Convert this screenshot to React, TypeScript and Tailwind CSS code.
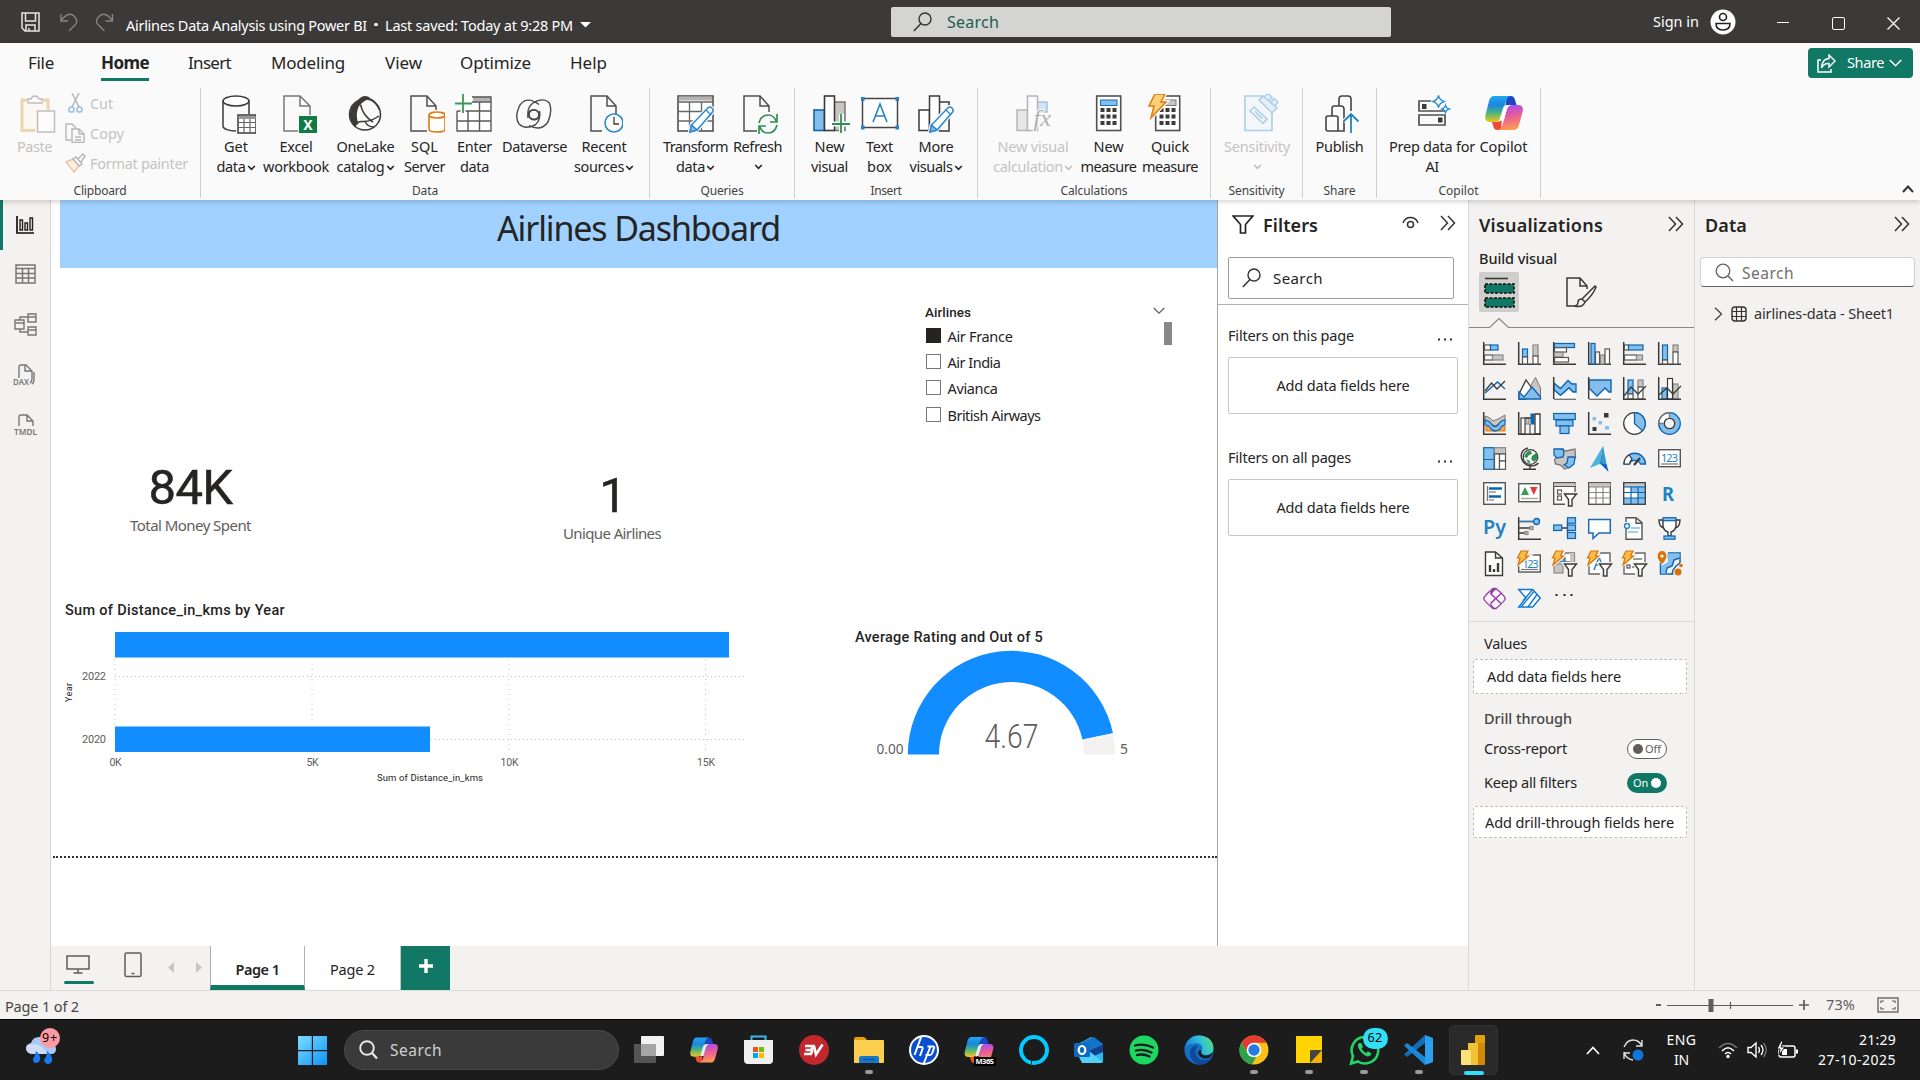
import React, { useLayoutEffect, useRef, useState } from "react";

const DK = "#3b3a39";
const BL = "#0f64b0";
const LB = "#83beec";
const GY = "#797775";
const LG = "#c8c6c4";

/** Single-line text whose tracking is tuned so that it spans exactly `w` pixels. */
function T({ w, className = "", children }: { w?: number; className?: string; children: string }) {
  const ref = useRef<HTMLSpanElement>(null);
  const [ls, setLs] = useState(0);
  useLayoutEffect(() => {
    const el = ref.current;
    if (!el || !w) return;
    el.style.letterSpacing = "0px";
    const natural = el.getBoundingClientRect().width;
    const next = (w - natural) / children.length;
    el.style.letterSpacing = next + "px";
    setLs(next);
  }, [w, children]);
  return (
    <span ref={ref} className={"inline-block shrink-0 whitespace-pre " + className} style={{ letterSpacing: ls }}>
      {children}
    </span>
  );
}

function Svg({ w, h, vb, className = "", children }: { w: number; h: number; vb?: string; className?: string; children: React.ReactNode }) {
  return (
    <svg width={w} height={h} viewBox={vb ?? `0 0 ${w} ${h}`} fill="none" className={"block shrink-0 " + className}>
      {children}
    </svg>
  );
}

const Chev = ({ c = "#242424" }: { c?: string }) => (
  <Svg w={9} h={6} className="mt-[4px] ml-[1px]">
    <path d="M1.2 1l3.3 3.4L7.8 1" stroke={c} strokeWidth="1.6" />
  </Svg>
);

/* ---------- Ribbon icons (38 x 40) ---------- */
const I = ({ children, dim }: { children: React.ReactNode; dim?: boolean }) => (
  <Svg w={38} h={40} className={dim ? "opacity-35" : ""}>
    {children}
  </Svg>
);
const Pencil = ({ x = 0, y = 0 }) => (
  <g transform={`translate(${x} ${y})`}>
    <path d="M1 26l1.5-7L19 1.8q2-1.6 4 .2t.6 4L8 24z" fill="#fafafa" stroke="#fafafa" strokeWidth="4" />
    <path d="M1 26l1.5-7L19 1.8q2-1.6 4 .2t.6 4L8 24z" fill="#fff" stroke="#2b88d0" strokeWidth="1.5" />
    <path d="M1 26l1.5-7 5.5 5z" fill={LB} stroke="#2b88d0" strokeWidth="1.5" />
    <path d="M17 4l5 5" stroke="#2b88d0" strokeWidth="1.3" />
  </g>
);
const PageCut = () => <path d="M17 37H6V2h16l9 10v9M22 2v10h9" stroke="#505050" strokeWidth="1.5" fill="#fafafa" />;
const Calc = ({ top = LB }: { top?: string }) => (
  <g>
    <rect x="7.7" y="2" width="24" height="34.5" fill="#fff" stroke="#505050" strokeWidth="1.6" />
    <rect x="11.5" y="6" width="16.5" height="5.5" fill={top} stroke={top === LB ? "#1b6ec2" : GY} />
    {[14, 20.5, 27].map((y) => [11.5, 17.5, 23.5].map((x) => <rect key={x + "-" + y} x={x} y={y} width="4" height="4" fill="#3b3a39" />))}
  </g>
);
const CopilotLogo = ({ w, h, id, className = "" }: { w: number; h: number; id: string; className?: string }) => (
  <Svg w={w} h={h} vb="0 0 38 34" className={className}>
    <defs>
      <linearGradient id={id + "a"} x1="0" y1="0" x2="0" y2="1">
        <stop offset="0" stopColor="#1ea7f0" />
        <stop offset=".35" stopColor="#1b86de" />
        <stop offset=".65" stopColor="#4bb57c" />
        <stop offset="1" stopColor="#f5c518" />
      </linearGradient>
      <linearGradient id={id + "b"} x1="0.3" y1="0" x2="0.5" y2="1">
        <stop offset="0" stopColor="#a04df0" />
        <stop offset=".45" stopColor="#e85a9c" />
        <stop offset="1" stopColor="#ff9d4d" />
      </linearGradient>
    </defs>
    <path d="M22 0h4q3 0 4 4l1.6 5H24q-3 0-4 3z" fill="#1a48c4" />
    <path d="M9 0h16q-3 1-4 5l-5 17q-1.500 4-5 4H5q-6 0-4.500-7L4 5Q5.500 0 9 0z" fill={`url(#${id}a)`} />
    <path d="M16 34h-4q-3 0-3.800-4L7 26h5q4 0 5-4z" fill="#ee4b3a" />
    <path d="M27 9h6q6 0 4.500 7L34 29q-1.500 5-5 5H13q3-1 4.500-5L22 13q1.500-4 5-4z" fill={`url(#${id}b)`} />
    <path d="M22.500 9h4.500q-3.500 0-5 4l-3.500 12h-4.500l4-13q1-3 4.500-3z" fill="#fff" opacity=".9" />
  </Svg>
);

const icons: Record<string, React.ReactNode> = {
  get: (
    <I>
      <path d="M5 7v25c0 3 6 5 13 5M31 7v13" stroke={DK} strokeWidth="1.5" />
      <ellipse cx="18" cy="7" rx="13" ry="5" stroke={DK} strokeWidth="1.5" fill="#fff" />
      <rect x="20" y="21" width="18" height="18" fill="#fff" stroke={DK} strokeWidth="1.500" />
      <path d="M20.500 23.500h17" stroke="#999" strokeWidth="3" />
      <path d="M20 28.500h18M20 33.500h18M26 25v14M32 25v14" stroke="#666" strokeWidth="1.200" />
    </I>
  ),
  excel: (
    <I>
      <path d="M19 37H5V2h16l10 10v9M21 2v10h10" stroke="#777" strokeWidth="1.500" fill="#fafafa" />
      <rect x="20" y="22" width="18" height="17" fill="#107c41" />
      <text x="29" y="36" textAnchor="middle" fontSize="14" fontWeight="700" fill="#fff" className="font-['Noto_Sans']">X</text>
    </I>
  ),
  onelake: (
    <I>
      <circle cx="19" cy="20.500" r="15.500" stroke={DK} strokeWidth="1.500" />
      <path d="M12 6Q18-1 25 4.500Q17 6 12.500 13Q9 21 12.500 30L8 32Q0 22 7 11z" fill={DK} />
      <path d="M14.500 10.500Q17 22 27 28M9 32.500Q10 27 17 27.500Q24 28 33 22M24.500 5Q31 9 33.500 16" stroke={DK} strokeWidth="1.500" />
      <path d="M19 27q2 6 9 6" stroke={DK} strokeWidth="1.300" />
    </I>
  ),
  sql: (
    <I>
      <path d="M20 37H4V2h16l9 10v4M20 2v10h9" stroke="#505050" strokeWidth="1.500" fill="#fafafa" />
      <path d="M22 21v14c0 4 16 4 16 0V21" fill="#fff" stroke="#e07a10" strokeWidth="1.600" />
      <ellipse cx="30" cy="21" rx="8" ry="3" fill="#fff" stroke="#e07a10" strokeWidth="1.600" />
    </I>
  ),
  enter: (
    <I>
      <rect x="2" y="3" width="34" height="34" fill="#fff" />
      <path d="M18 5h18" stroke="#b5b3b1" strokeWidth="5" />
      <path d="M2 17v20h34V3H17M2 17h34M2 27h34M13 17v20M24.500 8v29M17 8h19" stroke="#5a5a5a" strokeWidth="1.400" />
      <path d="M8 0v19M-1 9.500h18" stroke="#fafafa" strokeWidth="5" />
      <path d="M8 0v19M-1 9.500h18" stroke="#3a9a52" strokeWidth="1.800" />
    </I>
  ),
  dataverse: (
    <I>
      <path d="M24 10.500Q12 1.500 5 11Q-1 23 4 30Q10 36 20 31Q25 27 24.500 21Q23 15 17 16Q12 18 13 24" stroke="#4a4948" strokeWidth="1.400" />
      <path d="M14 31.500Q26 38 33 28Q38 16 34 8.500Q28 3 18 9Q12.500 13 13 20Q15 27 21 25.500Q26 23 24.500 17" stroke="#4a4948" strokeWidth="1.400" />
      <circle cx="19" cy="20.500" r="4.800" stroke="#4a4948" strokeWidth="1.400" />
    </I>
  ),
  recent: (
    <I>
      <PageCut />
      <circle cx="29" cy="29" r="9" fill="#fff" stroke="#2b88c8" strokeWidth="1.600" />
      <path d="M29 23v7h5" stroke={DK} strokeWidth="1.300" />
    </I>
  ),
  transform: (
    <I>
      <rect x="1" y="2" width="35" height="35" fill="#fff" stroke="#505050" strokeWidth="1.600" />
      <path d="M2 4.500h33" stroke="#b5b3b1" strokeWidth="4" />
      <path d="M1 8h35M1 17.500h35M1 27h35M12.500 8v29M24.500 8v29" stroke="#666" strokeWidth="1.300" />
      <Pencil x={12} y={12} />
    </I>
  ),
  refresh: (
    <I>
      <path d="M16 37H3V2h16l9 10v6M19 2v10h9" stroke="#505050" strokeWidth="1.500" fill="#fafafa" />
      <path d="M18 29q2-8 9-8 6 0 8 6M36 20v8h-7M36 31q-2 8-9 8-6 0-8-6M18 40v-8h7" stroke="#2f9151" strokeWidth="1.700" />
    </I>
  ),
  newvisual: (
    <I>
      <rect x="22" y="8" width="11" height="28.500" fill={LG} stroke={GY} strokeWidth="1.500" />
      <rect x="2" y="16" width="10.500" height="20.500" fill={LB} stroke={BL} strokeWidth="1.600" />
      <rect x="12.500" y="2" width="10" height="34.500" fill="#fff" stroke={DK} strokeWidth="1.600" />
      <path d="M20 30h19M29.500 20v20" stroke="#fafafa" strokeWidth="5" />
      <path d="M20 30h18M29 20v19" stroke="#2f9151" strokeWidth="1.800" />
    </I>
  ),
  textbox: (
    <I>
      <rect x="1.500" y="4.500" width="35" height="29" fill="#fff" stroke="#444" strokeWidth="1.500" />
      {[0, 34.500].map((x) => [3, 31.500].map((y) => <rect key={x + "-" + y} x={x} y={y} width="3.500" height="4" fill="#2283cc" />))}
      <path d="M12 28l7-18 7 18M14.500 22h9" stroke="#2283cc" strokeWidth="1.600" />
    </I>
  ),
  more: (
    <I>
      <path d="M23 8h9v29H22" stroke={DK} strokeWidth="1.500" />
      <rect x="2" y="16" width="10.500" height="20.500" fill="#fff" stroke={DK} strokeWidth="1.500" />
      <rect x="12.500" y="2" width="10" height="34.500" fill="#fff" stroke={DK} strokeWidth="1.500" />
      <Pencil x={12} y={12} />
    </I>
  ),
  newcalc: (
    <I dim>
      <rect x="2" y="16" width="10.500" height="20.500" fill={LG} stroke={DK} strokeWidth="1.500" />
      <rect x="22" y="8" width="10" height="10" fill={LB} stroke={BL} strokeWidth="1.500" />
      <rect x="12.500" y="2" width="10" height="34.500" fill="#fff" stroke={DK} strokeWidth="1.500" />
      <text x="18.500" y="32" fontSize="24" fontStyle="italic" fill="#222" stroke="#fafafa" strokeWidth="2" paintOrder="stroke" className="font-['Liberation_Serif']">fx</text>
    </I>
  ),
  measure: (
    <I>
      <Calc />
    </I>
  ),
  quick: (
    <I>
      <Calc top={LG} />
      <path d="M7 0h10l-4 8h5L3 24l3-12H1z" fill="#fbc657" stroke="#fafafa" strokeWidth="4" />
      <path d="M7 0h10l-4 8h5L3 24l3-12H1z" fill="#fbd277" stroke="#e07a10" strokeWidth="1.500" />
    </I>
  ),
  sens: (
    <I dim>
      <path d="M22 2H4v34.500h27V19" fill="#e8f2fb" stroke="#1683c8" strokeWidth="1.600" />
      <path d="M9 17l4-4 13 12-4 4.500zM14 17.500l7.500 7" fill="#d6eaf9" stroke="#1683c8" strokeWidth="1.500" />
      <path d="M18 6l4-4 14 12-5 5zM23 3l4-3.500 4 3.500-3 4M34 12l3-4-4-3.500-3 3.500" fill="#bcdcf5" stroke="#1683c8" strokeWidth="1.500" />
    </I>
  ),
  publish: (
    <I>
      <path d="M6 37q-2 0-2-2V24q0-2 2-2h8q2 0 2 2v13zM10 22v-7q0-3 2-3h7q3 0 3 3v22H6M17 12V5q0-3 3-3h6q3 0 3 3v12" stroke="#444" strokeWidth="1.600" />
      <path d="M29 39V21M21.500 27.500L29 20l7.500 7.500" stroke="#fafafa" strokeWidth="4" />
      <path d="M29 39V20.500M21.500 27.500L29 20l7.500 7.500" stroke="#2283c4" strokeWidth="1.800" />
    </I>
  ),
  prep: (
    <I>
      <path d="M17 7H5v10h27M5 21h26v10H5z" stroke="#505050" strokeWidth="1.700" />
      <rect x="8" y="10" width="4.500" height="5" fill={DK} />
      <rect x="24" y="23.500" width="4.500" height="5" fill={DK} />
      <path d="M24.500 1.500q1 4.500 5.500 6-4.500 1.500-5.500 6-1-4.500-5.500-6 4.500-1.500 5.500-6zM31.500 11.500q.7 2.700 3.500 3.500-2.800.8-3.500 3.500-.7-2.700-3.500-3.500 2.800-.8 3.500-3.500z" fill="#fff" stroke="#2b8fd8" strokeWidth="1.400" />
    </I>
  ),
  copilot: <CopilotLogo w={38} h={34} id="rc" className="mb-[4px] mt-[2px]" />,
};

type Item = { i: string; w: number; l1: [string, number]; l2?: [string, number] | "chev"; chev?: boolean; dim?: boolean; dx?: number };
const groups: { w: number; pl: number; label: [string, number]; items: Item[] }[] = [
  {
    w: 449, pl: 5, label: ["Data", 26],
    items: [
      { i: "get", w: 60, l1: ["Get", 24], l2: ["data", 29], chev: true, dx: 1 },
      { i: "excel", w: 60, l1: ["Excel", 33], l2: ["workbook", 66], dx: 2 },
      { i: "onelake", w: 79, l1: ["OneLake", 58], l2: ["catalog", 48], chev: true, dx: -1 },
      { i: "sql", w: 39, l1: ["SQL", 27], l2: ["Server", 41], dx: 1 },
      { i: "enter", w: 61, l1: ["Enter", 35], l2: ["data", 29], dx: -1 },
      { i: "dataverse", w: 59, l1: ["Dataverse", 65], dx: -1 },
      { i: "recent", w: 80, l1: ["Recent", 45], l2: ["sources", 50], chev: true },
    ],
  },
  {
    w: 145, pl: 6, label: ["Queries", 43],
    items: [
      { i: "transform", w: 79, l1: ["Transform", 65], l2: ["data", 29], chev: true },
      { i: "refresh", w: 45, l1: ["Refresh", 49], l2: "chev", dx: 2 },
    ],
  },
  {
    w: 183, pl: 7, label: ["Insert", 31],
    items: [
      { i: "newvisual", w: 55, l1: ["New", 30], l2: ["visual", 37], dx: 1 },
      { i: "textbox", w: 45, l1: ["Text", 27], l2: ["box", 25] },
      { i: "more", w: 68, l1: ["More", 35], l2: ["visuals", 43], chev: true },
    ],
  },
  {
    w: 233, pl: 6, label: ["Calculations", 67],
    items: [
      { i: "newcalc", w: 98, l1: ["New visual", 71], l2: ["calculation", 70], chev: true, dim: true, dx: 1 },
      { i: "measure", w: 53, l1: ["New", 30], l2: ["measure", 56], dx: -1 },
      { i: "quick", w: 70, l1: ["Quick", 38], l2: ["measure", 56], dx: -3 },
    ],
  },
  { w: 92, pl: 0, label: ["Sensitivity", 56], items: [{ i: "sens", w: 92, l1: ["Sensitivity", 66], l2: "chev", dim: true, dx: 3 }] },
  { w: 74, pl: 0, label: ["Share", 32], items: [{ i: "publish", w: 73, l1: ["Publish", 48], dx: 1 }] },
  {
    w: 164, pl: 5, label: ["Copilot", 40],
    items: [
      { i: "prep", w: 100, l1: ["Prep data for", 86], l2: ["AI", 13], dx: 1 },
      { i: "copilot", w: 43, l1: ["Copilot", 48] },
    ],
  },
];

function RibbonItem({ it }: { it: Item }) {
  const c = it.dim ? "#c0bfbe" : "#242424";
  return (
    <div className={"flex shrink-0 flex-col items-center text-[14.500px] leading-[20px] " + (it.dim ? "text-[#c4c3c2]" : "text-[#242424]")}>
      <div className="flex flex-col items-center" style={{ width: it.w }}>
        <div style={{ marginLeft: 2 * (it.dx ?? 0) }}>{icons[it.i]}</div>
        <div className="mt-[2px] flex"><T w={it.l1[1]}>{it.l1[0]}</T></div>
        {it.l2 === "chev" ? (
          <div className="pt-[4px]"><Chev c={c} /></div>
        ) : it.l2 ? (
          <div className="flex items-center">
            <T w={it.l2[1]}>{it.l2[0]}</T>
            {it.chev && <Chev c={c} />}
          </div>
        ) : null}
      </div>
    </div>
  );
}

/* ---------- Visualization gallery icons (23 x 23) ---------- */
const Ax = () => <path d="M.7 0v22.300H23" stroke={DK} strokeWidth="1.500" />;
const R = ({ x, y, w, h, k = "w" }: { x: number; y: number; w: number; h: number; k?: "w" | "b" | "g" | "d" }) => (
  <rect
    x={x} y={y} width={w} height={h} strokeWidth="1.200"
    fill={k === "b" ? LB : k === "g" ? LG : "#fff"}
    stroke={k === "b" ? BL : k === "g" ? "#8a8886" : k === "d" ? DK : "#555"}
  />
);
const Bolt = () => (
  <g>
    <path d="M3-1h8l-3 5h3L-.5 13l2-7H-1z" stroke="#f3f2f1" strokeWidth="3.500" fill="#f3f2f1" />
    <path d="M3-1h7L7.500 4H10.500L0 13l2-7H-.5z" fill="#fcbf4a" stroke="#d9730a" strokeWidth="1.200" />
  </g>
);
const Funnel = () => (
  <path d="M11.500 12h12l-4.500 5.500v7h-3.500v-7z" fill="#fff" stroke="#f3f2f1" strokeWidth="4" paintOrder="stroke" />
);
const FunnelLine = () => <path d="M11.500 12h12l-4.500 5.500v6.500h-3.500v-6.500z" fill="#fff" stroke={DK} strokeWidth="1.400" />;
const viz: React.ReactNode[] = [
  <><Ax /><R x={1.500} y={3} w={6} h={5} /><R x={7.500} y={3} w={7.500} h={5} k="b" /><R x={1.500} y={13} w={8} h={5} /><R x={9.500} y={13} w={10.500} h={5} k="g" /></>,
  <><Ax /><R x={4.500} y={7} w={5} h={8} k="b" /><R x={4.500} y={15} w={5} h={7} /><R x={15} y={3} w={5} h={11} k="g" /><R x={15} y={14} w={5} h={8} /></>,
  <><Ax /><R x={1.500} y={1.500} w={20} h={4} k="b" /><R x={1.500} y={5.700} w={12} h={4.300} /><R x={1.500} y={10.500} w={8.500} h={4.500} k="g" /><R x={1.500} y={15.500} w={14} h={4.500} /></>,
  <><Ax /><R x={3} y={1.500} w={4} h={20.500} k="b" /><R x={7.500} y={10} w={4} h={12} /><R x={12.500} y={13} w={4} h={9} k="g" /><R x={17} y={7} w={4.500} h={15} /></>,
  <><Ax /><R x={1.500} y={3} w={4} h={5} /><R x={5.500} y={3} w={14.500} h={5} k="b" /><R x={1.500} y={13} w={12} h={5} /><R x={13.500} y={13} w={6} h={5} k="g" /></>,
  <><Ax /><R x={4.500} y={3} w={5} h={15} k="b" /><R x={4.500} y={18} w={5} h={4} /><R x={15} y={3} w={5} h={7} k="g" /><R x={15} y={10} w={5} h={12} /></>,
  <><Ax /><path d="M2 16L14.500 5l7.500 7" stroke={BL} strokeWidth="1.300" /><path d="M2 14l6.500-8 5.500 6 8-8" stroke={DK} strokeWidth="1.300" /></>,
  <><path d="M12 10l5.500-9.500 5 10.500v11" fill={LG} stroke={GY} /><path d="M1 17L8 3l7 10-7 9H1z" fill="#fff" stroke={DK} strokeWidth="1.300" /><path d="M1 22V15l5 5 8-10 8.500 10v2z" fill={LB} stroke={BL} strokeWidth="1.400" /></>,
  <><path d="M1 6l6.500 5.500L15 3.500l4 3.500h4v8h-3l-4-4-8.500 7.500L1 13z" fill={LB} stroke={BL} strokeWidth="1.300" /><path d="M8 18.500l8-7.500 4 4h3v7H1v-9z" fill="#fff" /><path d="M1 13l6.500 5.500L16 11l4 4h3" stroke={BL} strokeWidth="1.300" /><path d="M.7 0v22" stroke={DK} strokeWidth="1.500" /><path d="M1 22.300h22" stroke={GY} strokeWidth="1.400" /></>,
  <><path d="M1 14l7 7 9-8 4 3h2v6H1z" fill="#fff" /><path d="M1 3h22v12h-2l-4-4-8 8-8-8z" fill={LB} stroke={BL} strokeWidth="1.400" /><path d="M.7 0v22" stroke={DK} strokeWidth="1.500" /><path d="M1 22.300h22" stroke={GY} strokeWidth="1.400" /></>,
  <><R x={5} y={3} w={5} h={14} k="b" /><R x={5} y={17} w={5} h={5} /><R x={15} y={3} w={5} h={7} k="g" /><R x={15} y={10} w={5} h={12} /><Ax /><path d="M1 19l7-9 7 7 8-8" stroke={DK} strokeWidth="1.300" /></>,
  <><R x={4} y={11} w={5} h={11} k="b" /><R x={15} y={7} w={5} h={15} k="g" /><R x={9.500} y={1.500} w={5} h={20.500} k="d" /><Ax /><path d="M1 18l8-7 6 6 8-8" stroke={DK} strokeWidth="1.300" /></>,
  <><path d="M2 4q5 1 8 5 4-1 12-6v6q-6 2-10 5Q6 9 2 10z" fill={LG} stroke={GY} /><path d="M3 14h19v5H3z" fill="#f7a75b" stroke="#d9730a" /><path d="M2 8q5 1 7 5 3 3 6 0 3-5 7-5v5q-3 0-5 4-5 4-9 0-2-4-6-4z" fill={LB} stroke={BL} strokeWidth="1.200" /><Ax /></>,
  <><R x={3} y={6} w={4} h={16} k="d" /><R x={8} y={6} w={3} h={6} k="g" /><rect x="12.500" y="1.500" width="4" height="11" fill={BL} /><path d="M7 6h6M17 2h5v20h-5z" fill="#fff" stroke={DK} strokeWidth="1.300" /><path d="M12 12v10" stroke={DK} /><Ax /></>,
  <><R x={.7} y={1.500} w={21.600} h={6} k="b" /><R x={3} y={8} w={17} h={6} k="b" /><R x={7} y={14} w={9} h={7.500} k="b" /></>,
  <><Ax /><rect x="16" y="1" width="4.500" height="4.500" fill={DK} /><rect x="4.500" y="15" width="4" height="4" fill={DK} /><rect x="4.500" y="5" width="3.500" height="3.500" fill={LB} /><rect x="10.500" y="9" width="3.500" height="3.500" fill={LB} /><rect x="17" y="14" width="4" height="3.500" fill={LB} /></>,
  <><circle cx="11.500" cy="11.500" r="10.800" fill="#fff" stroke={DK} strokeWidth="1.300" /><path d="M11.500.7a10.800 10.800 0 0 1 8 18l-8-7z" fill={LB} stroke={BL} strokeWidth="1.300" /></>,
  <><circle cx="11.500" cy="11.500" r="8" stroke="#fff" strokeWidth="5" /><path d="M11.500 3.500a8 8 0 1 1-8 8" stroke={LB} strokeWidth="5" /><circle cx="11.500" cy="11.500" r="10.800" stroke={BL} strokeWidth="1.300" /><circle cx="11.500" cy="11.500" r="5.200" stroke={DK} strokeWidth="1.300" /><path d="M.7 11.500A10.800 10.800 0 0 1 11.500.7v5M.7 11.500h5" stroke={GY} strokeWidth="1.300" /></>,
  <><R x={.7} y={.7} w={10.500} h={21.600} k="b" /><path d="M.7 12.500h10.500" stroke={BL} /><R x={11.500} y={.7} w={11} h={6} k="g" /><R x={11.500} y={7} w={5} h={15.300} /><R x={16.500} y={7} w={6} h={7} /><R x={16.500} y={14} w={6} h={8.300} /></>,
  <><circle cx="12.500" cy="10" r="7.300" fill="#fff" stroke={DK} strokeWidth="1.200" /><path d="M8 6q3-3 5-2l1 3-3 1-2 3-3-1zM14 9l4-3q2 3 1 6l-3 3-3-3zM8 12l4 2v2l-2-.5z" fill="#2f9151" /><path d="M10 1Q2 3 3.500 11q2 7 9 8 5 0 8-3M12 19v3M5 22.300h13" stroke={DK} strokeWidth="1.400" /></>,
  <><path d="M9 2l4 2 9-2 .5 8-3 8-5 3-3 1-4-4-5-1-1-4 3-5z" fill={LG} stroke={GY} strokeWidth="1.300" /><path d="M1 2h9l1 4-1 4-6 1-3-3z" fill={LB} stroke={BL} strokeWidth="1.300" /><path d="M15 10h7l-1 7-5 4-5-3 3-2z" fill={LB} stroke={BL} strokeWidth="1.300" /></>,
  <><path d="M15-1L2 21l9.500-4z" fill="#4cb3dc" /><path d="M15-1l-3.500 18 6 2z" fill="#2a86c4" /><path d="M15-1l5 25-7-7z" fill="#3a9bd0" /><path d="M12 16l8.500 9-2-7.500z" fill="#0b64c4" /></>,
  <><path d="M1 17A10.500 10.500 0 0 1 22.500 17h-5a6 6 0 0 0-11 0z" fill={LB} stroke={BL} strokeWidth="1.400" /><path d="M1 17q0-6 5-9l3 4q-2 2-2.500 5z" fill="#fff" stroke={DK} strokeWidth="1.200" /><path d="M11 18l6-7" stroke={DK} strokeWidth="2.200" /></>,
  <><rect x=".7" y="2.700" width="21.600" height="17" fill="#fff" stroke="#555" strokeWidth="1.400" /><text x="11.500" y="14.500" fontSize="11" textAnchor="middle" textLength="17" fill="#2283c4" className="font-['Noto_Sans']">123</text><path d="M3 17h17" stroke={GY} strokeWidth="1.200" /></>,
  <><rect x=".7" y=".7" width="21.600" height="21.600" fill="#fff" stroke="#555" strokeWidth="1.400" /><path d="M4.500 4v15" stroke={GY} strokeWidth="1.400" /><path d="M6 6.500h13M6 14.500h12" stroke={BL} strokeWidth="2.400" /><path d="M6 10h7M6 18h5" stroke="#999" strokeWidth="1.400" /></>,
  <><rect x=".7" y="1.700" width="21.600" height="18" fill="#fff" stroke="#555" strokeWidth="1.400" /><path d="M3 13l4-8 4 8z" fill="#3a9a52" /><path d="M12 5h7.500l-3.700 8z" fill="#e03a3a" /><path d="M3 16.500h17" stroke="#aaa" strokeWidth="1.500" /></>,
  <><path d="M22 10V.7H.7v21.600H12" fill="#fff" stroke="#555" strokeWidth="1.400" /><path d="M1 2.700h21.500" stroke={LG} strokeWidth="2.500" /><path d="M1 4.500h21.500" stroke="#555" /><R x={4.500} y={8} w={4} h={4} /><R x={4.500} y={14} w={4} h={4} /><Funnel /><FunnelLine /></>,
  <><rect x=".7" y=".7" width="21.600" height="21.600" fill="#fff" stroke="#555" strokeWidth="1.400" /><path d="M1 2.700h21.500" stroke={LG} strokeWidth="2.500" /><path d="M1 4.800h21.500M1 10.500h21.500M1 16h21.500M8 5v17M15 5v17" stroke="#8a8886" strokeWidth="1.200" /></>,
  <><rect x=".7" y=".7" width="21.600" height="21.600" fill="#fff" /><path d="M15 5h7v17H1v-6h14zM8 5h7v5H8z" fill={LB} /><path d="M1 2.700h21.500" stroke={LG} strokeWidth="2.500" /><path d="M1 4.800h21.500M1 10.500h21.500M1 16h21.500M8 5v17M15 5v17" stroke={BL} strokeWidth="1.200" /><rect x=".7" y=".7" width="21.600" height="21.600" stroke="#444" strokeWidth="1.400" /></>,
  <text x="10" y="18.500" fontSize="20" textAnchor="middle" fontWeight="700" textLength="12" lengthAdjust="spacingAndGlyphs" fill="#2283c4" className="font-['Noto_Sans']">R</text>,
  <text x="11.500" y="17" fontSize="20" textAnchor="middle" fontWeight="600" textLength="23" lengthAdjust="spacingAndGlyphs" fill="#2283c4" className="font-['Noto_Sans']">Py</text>,
  <><Ax /><path d="M1 4.500h14M1 11h11M1 16h6" stroke={DK} strokeWidth="1.300" /><path d="M1 4.500h14" stroke="#2283c4" strokeWidth="1.300" /><circle cx="18.500" cy="4.500" r="3" fill={LB} stroke={BL} strokeWidth="1.300" /><R x={12} y={9.500} w={3} h={3} k="g" /><R x={7} y={14.500} w={3} h={3} k="g" /></>,
  <><path d="M9 11h5M14.500 3v17M14 3h2M14 20h2" stroke={DK} strokeWidth="1.300" /><R x={.7} y={8} w={8} h={5.500} k="b" /><R x={14.500} y={.7} w={8} h={5.500} k="b" /><R x={14.500} y={8} w={8} h={5.500} k="b" /><R x={14.500} y={15.500} w={8} h={6} k="b" /></>,
  <path d="M.7 2.500h21.600V16H11l-6 5.500V16H.7z" fill="#fff" stroke="#1c6ab5" strokeWidth="1.500" />,
  <><path d="M3 5V.7h10l6 5v16.600H3V12M13 .7v5.600h6" fill="#fff" stroke="#555" strokeWidth="1.400" /><path d="M8 11h9M5 15h10" stroke={LB} strokeWidth="1.500" /><circle cx="4" cy="9" r="2.400" fill="#fff" stroke="#2283c4" strokeWidth="1.500" /></>,
  <><path d="M5 3H1q0 7 5 8M18 3h4q0 7-5 8" stroke={DK} strokeWidth="1.400" /><path d="M5 3v6q1 5 5 6v4h3v-4q4-1 5-6V3z" fill="#fff" stroke={DK} strokeWidth="1.400" /><rect x="5" y=".7" width="13" height="3" fill={LB} stroke={BL} strokeWidth="1.200" /><rect x="6" y="19" width="11" height="3.200" fill={LB} stroke={BL} strokeWidth="1.200" /></>,
  <><path d="M2.500 0h10l7 6v17.500h-17zM12.500 0v6h7" fill="#fff" stroke={DK} strokeWidth="1.400" /><path d="M7 20v-7M11 20v-3M15 20v-9" stroke={DK} strokeWidth="2.400" /></>,
  <><rect x=".7" y="3" width="21.600" height="17" fill="#fff" stroke="#555" strokeWidth="1.400" /><text x="12.500" y="15.500" fontSize="11" textAnchor="middle" textLength="16" fill="#2283c4" className="font-['Noto_Sans']">123</text><path d="M3 17.500h17" stroke={GY} strokeWidth="1.200" /><Bolt /></>,
  <><R x={12} y={1} w={9.500} h={9} /><path d="M17 1h4.500v9H17z" fill={LG} /><R x={1} y={12} w={9} h={9} k="g" /><path d="M6 5h5v5H6z" fill={LB} stroke={BL} /><Funnel /><FunnelLine /><Bolt /></>,
  <><path d="M22 10V1H1v21h11" fill="#fff" stroke="#666" strokeWidth="1.400" /><path d="M6 18l5-13 5 13M8 13h6" stroke="#2283c4" strokeWidth="1.500" /><Funnel /><FunnelLine /><Bolt /></>,
  <><path d="M22 10V1H1v21h11" fill="#fff" stroke="#666" strokeWidth="1.400" /><path d="M10 7h9M9 15h5" stroke={GY} strokeWidth="1.400" /><R x={4} y={13} w={3} h={3} /><Funnel /><FunnelLine /><Bolt /></>,
  <><path d="M2.500 11v11h13M10 1h12v10" stroke={BL} strokeWidth="1.500" fill="#fff" /><path d="M9 1.500h12.500V6l-5 2-2 6-6 2-1 5.500H3V14l7-4z" fill={LB} /><path d="M8 21l1-5 5-2 2-6 5.500-2M14 22l1-4 3-4 4-3" stroke={BL} strokeWidth="1.400" /><path d="M4 12Q-1.500 7 0 2 1-1 4-1t4 3Q9.500 7 4 12z" fill="#d9730a" /><circle cx="4" cy="4" r="1.600" fill="#fff" /><circle cx="20" cy="20" r="3.500" fill="#d9730a" /><circle cx="23" cy="13.500" r="1.800" fill="#d9730a" /></>,
  <g stroke="#8e3a9c" strokeWidth="1.300"><path d="M10 1.500Q1 9 .7 11.500 1 14 10 21.500h3q9-7.500 9.300-10Q22 9 13 1.500z" fill="#fbf3fc" /><path d="M11 1.500Q7 5 8 7l10 9.500M18 6.500L8 16q-1 2 3 5.500M13 1.500Q9 5 8.500 6.500" /></g>,
  <g stroke="#0f78d4" strokeWidth="1.400"><path d="M.7 2.500h14l7.600 8.500-7.600 9H.7L8 11z" fill="#fff" /><path d="M5 14L14.500 2.500M10 20L19 7.500M3.500 19.500L16 4.500" /></g>,
  <path d="M2.500 8h2M10.500 8h2M17.500 8h2" stroke="#242424" strokeWidth="2" />,
];

const DblChev = () => (
  <Svg w={16} h={16}>
    <path d="M1 1l6.500 7L1 15M8 1l6.500 7L8 15" stroke="#333" strokeWidth="1.500" />
  </Svg>
);
const Lens = ({ c = "#333" }: { c?: string }) => (
  <Svg w={19} h={20}>
    <circle cx="12" cy="7" r="6" stroke={c} strokeWidth="1.400" />
    <path d="M8 11.500L.8 19" stroke={c} strokeWidth="1.500" />
  </Svg>
);

function TitleBar() {
  return (
    <header className="flex h-[43px] shrink-0 items-center bg-[#3b3a38] text-white">
      <Svg w={19} h={20} className="ml-[21px]">
        <path d="M1 1h17v18H4l-3-3zM4.500 1v8h10V1M5 19v-6h9v6M8 19v-3" stroke="#e6e6e6" strokeWidth="1.500" />
      </Svg>
      <Svg w={18} h={20} className="ml-[20px]">
        <path d="M1 2v7h7M1.500 8Q9-1 14 4t1 9l-6 6" stroke="#858482" strokeWidth="1.400" />
      </Svg>
      <Svg w={18} h={20} className="ml-[18px]">
        <path d="M16.500 2v7h-7M16 8Q9-1 3.500 4t-1 9l6 6" stroke="#858482" strokeWidth="1.400" />
      </Svg>
      <div className="ml-[12px] flex items-center pt-[6px] text-[14.500px] leading-[20px]">
        <T w={241}>Airlines Data Analysis using Power BI</T>
        <span className="mx-[7px] h-[3px] w-[4px] rounded-full bg-white" />
        <T w={188}>Last saved: Today at 9:28 PM</T>
        <Svg w={12} h={6} className="ml-[7px]"><path d="M0 0h11L5.500 5.500z" fill="#fff" /></Svg>
      </div>
      <div className="ml-[299px] flex h-[30px] w-[500px] shrink-0 items-center rounded-[2px] bg-[#d4d4d2] pl-[22px] text-[16px] text-[#1d5f50]">
        <Lens />
        <T w={52} className="ml-[15px]">Search</T>
      </div>
      <T w={46} className="ml-[262px] text-[14.500px]">Sign in</T>
      <Svg w={26} h={26} className="ml-[11px]">
        <circle cx="13" cy="13" r="12.500" fill="#fff" />
        <circle cx="13" cy="8" r="3.500" stroke="#222" strokeWidth="1.600" />
        <path d="M6 14.500h14q0 6.500-7 6.500t-7-6.500z" stroke="#222" strokeWidth="1.600" />
      </Svg>
      <div className="mt-[2px] ml-[41px] h-[1.500px] w-[12px] bg-white" />
      <div className="ml-[43px] mt-[3px] h-[13px] w-[13px] rounded-[2px] border-[1.500px] border-white" />
      <Svg w={13} h={13} className="ml-[42px] mt-[3px]"><path d="M.5.5l12 12M12.500.5l-12 12" stroke="#fff" strokeWidth="1.300" /></Svg>
    </header>
  );
}

function Ribbon() {
  const tabs: [string, number, number][] = [["File", 28, 26], ["Home", 47, 48], ["Insert", 39, 43], ["Modeling", 40, 74], ["View", 40, 37], ["Optimize", 38, 71], ["Help", 39, 37]];
  return (
    <section className="relative z-10 flex h-[157px] shrink-0 flex-col bg-[#fafafa] shadow-[0_1px_6px_rgba(0,0,0,0.22)]">
      <div className="flex h-[40px] items-start">
        {tabs.map(([t, ml, w]) => (
          <div key={t} className="flex flex-col text-[17px] leading-[40px] text-[#242424]" style={{ marginLeft: ml }}>
            <div className={"flex h-[35px] " + (t === "Home" ? "font-bold" : "")}><T w={w}>{t}</T></div>
            {t === "Home" && <div className="h-[3px] bg-[#117865]" />}
          </div>
        ))}
        <div className="mr-[7px] mt-[5px] ml-auto flex h-[30px] w-[105px] items-center rounded-[4px] bg-[#117865] pl-[9px] text-[14.500px] text-white">
          <Svg w={19} h={19}>
            <path d="M4 6H1v12h13v-3" stroke="#fff" strokeWidth="1.500" />
            <path d="M12 1l6 6-6 6V9.500Q7 9 4.500 14 5 5 12 4.500z" stroke="#fff" strokeWidth="1.400" />
          </Svg>
          <T w={37} className="ml-[11px]">Share</T>
          <Svg w={13} h={8} className="ml-[5px]"><path d="M.8 1l5.700 5.700L12.200 1" stroke="#fff" strokeWidth="1.600" /></Svg>
        </div>
      </div>
      <div className="flex h-[117px] pt-[5px]">
        <div className="flex h-[110px] w-[201px] shrink-0 flex-col border-r border-[#d1d0cf] text-[14.500px] text-[#c4c3c2]">
          <div className="flex h-[96px] shrink-0">
            <div className="flex w-[67px] flex-col items-center pt-[6px] leading-[20px]">
              <Svg w={36} h={40} className="ml-[8px] opacity-45">
                <path d="M15 36.500H2V6h26v10" stroke="#e0a95c" strokeWidth="3" fill="#fdf6ea" />
                <path d="M8 9V5h3q1-3 4-3t4 3h3v4z" fill="#fff" stroke="#777" strokeWidth="1.300" />
                <rect x="17.500" y="17" width="17" height="21" fill="#fff" stroke="#777" strokeWidth="1.500" />
              </Svg>
              <T w={35} className="mt-[2px] ml-[2px]">Paste</T>
            </div>
            <div className="flex flex-col leading-[30px]">
              <div className="flex h-[30px] items-center">
                <Svg w={19} h={20} className="opacity-45">
                  <path d="M5 0l7 14M12 0L5 14" stroke="#666" strokeWidth="1.500" />
                  <circle cx="4.500" cy="16.500" r="2.600" stroke="#2283c4" strokeWidth="1.500" />
                  <circle cx="12.500" cy="16.500" r="2.600" stroke="#2283c4" strokeWidth="1.500" />
                </Svg>
                <T w={23} className="ml-[4px]">Cut</T>
              </div>
              <div className="flex h-[30px] items-center">
                <Svg w={20} h={20} className="-ml-[2px] opacity-45">
                  <path d="M6 17H1V1h6l4 4M7 6h7l5 5v8.500H7zM14 6v5h5M10 14h6M10 17h6" stroke="#666" strokeWidth="1.400" />
                </Svg>
                <T w={34} className="ml-[5px]">Copy</T>
              </div>
              <div className="flex h-[30px] items-center">
                <Svg w={21} h={20} className="-ml-[2px] opacity-45">
                  <path d="M1 9l7-3 6 7-5 6z" fill="#fbe3c4" stroke="#d9832b" strokeWidth="1.400" />
                  <path d="M8 6l3-2 6 7-3 2zM13 6l5-5 2 2-4 6" fill="#fff" stroke="#666" strokeWidth="1.400" />
                </Svg>
                <T w={98} className="ml-[4px]">Format painter</T>
              </div>
            </div>
          </div>
          <div className="flex justify-center text-[12px] leading-[14px] text-[#424242]"><T w={53}>Clipboard</T></div>
        </div>
        {groups.map((g) => (
          <div key={g.label[0]} className="flex h-[110px] shrink-0 flex-col border-r border-[#d1d0cf]" style={{ width: g.w }}>
            <div className="flex h-[96px] shrink-0 pt-[6px]" style={{ paddingLeft: g.pl }}>
              {g.items.map((it) => <RibbonItem key={it.i} it={it} />)}
            </div>
            <div className="flex justify-center text-[12px] leading-[14px] text-[#424242]"><T w={g.label[1]}>{g.label[0]}</T></div>
          </div>
        ))}
        <Svg w={12} h={8} className="mr-[6px] mb-[7px] ml-auto self-end"><path d="M1 7l5-5.500L11 7" stroke="#333" strokeWidth="2" /></Svg>
      </div>
    </section>
  );
}

function Rail() {
  return (
    <nav className="flex w-[51px] shrink-0 flex-col border-r border-[#d8d6d4] bg-[#f3f2f1]">
      <div className="flex h-[50px] items-center border-l-[3px] border-[#117865] pl-[13px]">
        <Svg w={18} h={18}>
          <path d="M1 0v17h17" stroke="#111" strokeWidth="1.700" />
          <path d="M4 4h2.500v10H4zM9 7h2.500v7H9zM14 2h2.500v12H14z" stroke="#222" strokeWidth="1.400" />
        </Svg>
      </div>
      <div className="flex h-[48px] items-center pl-[15px]">
        <Svg w={21} h={20}>
          <path d="M1 1h19v18H1zM1 4.500h19M1 9.500h19M1 14h19M7.500 4.500V19M13.500 4.500V19" stroke="#797775" strokeWidth="1.500" />
        </Svg>
      </div>
      <div className="flex h-[52px] items-center pl-[14px]">
        <Svg w={23} h={23}>
          <path d="M1 7h9v9H1zM14 1h8v8h-8zM14 14h8v8h-8zM1 10h9M14 4h8M14 17h8M6 7V4h8M6 16v3h8" stroke="#797775" strokeWidth="1.400" />
        </Svg>
      </div>
      <div className="flex h-[50px] items-center pl-[13px]">
        <Svg w={23} h={22}>
          <path d="M6 14V3q0-2 2-2h5l6 6v8q0 3-2 4M12 1v6h7M21 8v8q0 3-2 4" stroke="#797775" strokeWidth="1.400" />
          <text x="0" y="20.500" fontSize="8.500" fontWeight="600" textLength="16" lengthAdjust="spacingAndGlyphs" fill="#797775" stroke="#f3f2f1" strokeWidth="1.500" paintOrder="stroke" className="font-['Noto_Sans']">DAX</text>
        </Svg>
      </div>
      <div className="flex h-[50px] items-center pl-[14px]">
        <Svg w={24} h={22}>
          <path d="M5 12V3q0-2 2-2h6l6 6v5M13 1v6h6" stroke="#797775" strokeWidth="1.400" />
          <text x="0" y="20.500" fontSize="9" fontWeight="600" textLength="23" lengthAdjust="spacingAndGlyphs" fill="#797775" className="font-['Noto_Sans']">TMDL</text>
        </Svg>
      </div>
    </nav>
  );
}

function BarChart() {
  const xs: [number, string, number][] = [[55, "0K", 12], [252, "5K", 12], [449, "10K", 18], [645.500, "15K", 18]];
  const f = "font-['Roboto']";
  return (
    <Svg w={700} h={165}>
      {xs.map(([x]) => <path key={x} d={`M${x} 39v95`} stroke="#c8c6c4" strokeDasharray="1 4" />)}
      <path d="M55 56.500h629M55 119.500h629" stroke="#c8c6c4" strokeDasharray="1 3" />
      <rect x="55" y="12" width="614" height="25.500" fill="#118dff" />
      <rect x="55" y="106.500" width="315" height="25.500" fill="#118dff" />
      <text x="22" y="60" fontSize="11" textLength="24" fill="#605e5c" className={f}>2022</text>
      <text x="22" y="123" fontSize="11" textLength="24" fill="#605e5c" className={f}>2020</text>
      {xs.map(([x, t, w]) => <text key={t} x={x + 0.5} y="146" fontSize="10.500" textAnchor="middle" textLength={w} fill="#605e5c" className={f}>{t}</text>)}
      <text x="317" y="161" fontSize="9.500" textLength="106" fill="#252423" className={f}>Sum of Distance_in_kms</text>
      <text transform="translate(12 82) rotate(-90)" fontSize="9" textLength="19" fill="#252423" className={f}>Year</text>
    </Svg>
  );
}

function Gauge() {
  const cx = 134.500, cy = 104.500, ro = 103.700, ri = 72.500;
  const a = Math.PI * (1 - 4.670 / 5);
  const p = (r: number, t: number) => `${cx + r * Math.cos(t)} ${cy - r * Math.sin(t)}`;
  const arc = (from: number, to: number) => `M${p(ro, from)}A${ro} ${ro} 0 0 1 ${p(ro, to)}L${p(ri, to)}A${ri} ${ri} 0 0 0 ${p(ri, from)}Z`;
  return (
    <Svg w={260} h={108}>
      <path d={arc(Math.PI, a)} fill="#118dff" />
      <path d={arc(a, 0)} fill="#f3f2f1" />
      <text x={cx} y="98" fontSize="34" fontWeight="300" textAnchor="middle" textLength="54" lengthAdjust="spacingAndGlyphs" fill="#605e5c" className="font-['Roboto']">4.67</text>
      <text x="-0.500" y="104" fontSize="15" textLength="27" lengthAdjust="spacingAndGlyphs" fill="#605e5c" className="font-['Noto_Sans']">0.00</text>
      <text x="243" y="104" fontSize="15" textLength="8" lengthAdjust="spacingAndGlyphs" fill="#605e5c" className="font-['Noto_Sans']">5</text>
    </Svg>
  );
}

function Report() {
  const opts: [string, number][] = [["Air France", 65], ["Air India", 53], ["Avianca", 50], ["British Airways", 93]];
  return (
    <main className="relative w-[1166px] shrink-0 overflow-hidden bg-white">
      <div className="ml-[9px] flex h-[68px] justify-center bg-[#a0d1ff] pt-[4px] text-[34px] leading-[48px] text-[#252423]">
        <T w={283}>Airlines Dashboard</T>
      </div>
      <div className="absolute left-[80px] top-[263px] flex w-[119px] flex-col items-center">
        <T w={84} className="font-['Roboto'] text-[49px] leading-[50px] text-[#252423] [-webkit-text-stroke:0.500px_#252423]">84K</T>
        <T w={121} className="mt-[1px] text-[15px] leading-[22px] text-[#605e5c]">Total Money Spent</T>
      </div>
      <div className="absolute left-[511px] top-[271px] flex w-[100px] flex-col items-center">
        <T className="ml-[2px] font-['Roboto'] text-[49px] leading-[50px] text-[#252423] [-webkit-text-stroke:0.500px_#252423]">1</T>
        <T w={98} className="mt-[1px] text-[15px] leading-[22px] text-[#605e5c]">Unique Airlines</T>
      </div>
      <div className="absolute left-[874px] top-[101px] flex w-[250px] flex-col">
        <div className="flex h-[22px] items-center justify-between pr-[10px]">
          <T w={46} className="font-['Roboto'] text-[13.500px] font-medium text-[#252423]">Airlines</T>
          <Svg w={12} h={8} className="-mt-[2px]"><path d="M.8 1l5.200 5.200L11.200 1" stroke="#605e5c" strokeWidth="1.200" /></Svg>
        </div>
        <div className="flex justify-between">
          <div className="flex flex-col">
            {opts.map(([t, w], i) => (
              <div key={t} className="flex h-[26.400px] items-center">
                <div className={"-mt-[2px] ml-[0.500px] h-[15px] w-[15.500px] border " + (i === 0 ? "border-[#252423] bg-[#252423]" : "border-[#797775]")} />
                <T w={w} className="-mt-[1px] ml-[6.500px] text-[14.500px] leading-[20px] text-[#252423]">{t}</T>
              </div>
            ))}
          </div>
          <div className="mr-[3px] -mt-[1px] h-[23px] w-[8px] bg-[#8a8886]" />
        </div>
      </div>
      <div className="absolute left-[9px] top-[401px] flex flex-col">
        <T w={220} className="ml-[5px] self-start font-['Roboto'] text-[14.500px] leading-[20px] font-medium text-[#252423]">Sum of Distance_in_kms by Year</T>
        <div className="-mt-px"><BarChart /></div>
      </div>
      <div className="absolute left-[804px] top-[427px] flex flex-col">
        <T w={188} className="self-start font-['Roboto'] text-[14.500px] leading-[22px] font-medium text-[#252423]">Average Rating and Out of 5</T>
        <div className="ml-[22px] mt-[1px]"><Gauge /></div>
      </div>
      <div className="absolute left-[2px] top-[656px] h-0 w-[1164px] border-t-2 border-dotted border-[#333]" />
    </main>
  );
}

function FilterGroup({ t, w, mt }: { t: string; w: number; mt: number }) {
  return (
    <div className="flex flex-col" style={{ marginTop: mt }}>
      <div className="flex h-[22px] items-center pr-[15px] pl-[10px]">
        <T w={w} className="text-[14.500px]">{t}</T>
        <Svg w={16} h={4} className="mt-[8px] ml-auto"><path d="M1 1.500h2M7 1.500h2M13 1.500h2" stroke="#333" strokeWidth="1.800" /></Svg>
      </div>
      <div className="mt-[10px] ml-[10px] flex h-[57px] w-[230px] items-center justify-center rounded-[2px] border border-[#c8c6c4] pt-[1px] text-[14.500px]">
        <T w={133}>Add data fields here</T>
      </div>
    </div>
  );
}

function Filters() {
  return (
    <aside className="flex w-[251px] shrink-0 flex-col border-l border-[#a6a4a2] bg-white text-[#252423]">
      <div className="flex h-[105px] flex-col border-b border-[#b3b0ad] pl-[10px]">
        <div className="flex h-[48px] items-center pl-[4px]">
          <Svg w={22} h={19}><path d="M1.200 1h19.600l-7.300 8.500V18h-5V9.500z" stroke="#252423" strokeWidth="1.700" /></Svg>
          <T w={55} className="mt-[2px] ml-[9px] text-[18px] font-semibold">Filters</T>
          <Svg w={17} h={14} className="ml-[84px] -mt-[2px]">
            <path d="M1 7q2-5.500 7.500-5.500T16 7" stroke="#333" strokeWidth="1.500" />
            <circle cx="8.500" cy="8.500" r="3" stroke="#333" strokeWidth="1.500" />
          </Svg>
          <div className="ml-[21px] -mt-[2px]"><DblChev /></div>
        </div>
        <div className="mt-[9px] flex h-[42px] w-[226px] items-center rounded-[2px] border border-[#a19f9d] pl-[13px]">
          <Lens />
          <T w={50} className="mt-[1px] ml-[12px] text-[15px]">Search</T>
        </div>
      </div>
      <FilterGroup t="Filters on this page" w={126} mt={20} />
      <FilterGroup t="Filters on all pages" w={123} mt={33} />
    </aside>
  );
}

function Visualizations() {
  return (
    <aside className="flex w-[227px] shrink-0 flex-col border-x border-[#dcdad8] bg-[#f3f2f1] text-[#252423]">
      <div className="flex h-[48px] items-center pr-[10px] pl-[10px]">
        <T w={124} className="mt-[2px] text-[18px] font-semibold">Visualizations</T>
        <div className="ml-auto"><DblChev /></div>
      </div>
      <T w={78} className="ml-[10px] self-start text-[14.500px] leading-[20px] font-medium">Build visual</T>
      <div className="mt-[4px] flex h-[40px] items-center pl-[10px]">
        <div className="flex h-[40px] w-[40px] items-center justify-center rounded-[2px] bg-[#d0cecc]">
          <Svg w={31} h={31}>
            <path d="M1 1.500h23" stroke={DK} strokeWidth="1.600" />
            <rect x="1" y="7" width="29" height="9" fill="#117865" stroke="#111" strokeWidth="1.600" strokeDasharray="3 1.500" />
            <rect x="1" y="21" width="29" height="9" fill="#117865" stroke="#111" strokeWidth="1.600" strokeDasharray="3 1.500" />
          </Svg>
        </div>
        <Svg w={32} h={32} className="ml-[46px]">
          <path d="M9 30H2V2h13l7 8M15 2v8h7l0 3" stroke={DK} strokeWidth="1.500" />
          <path d="M30 10L17 23l3 3q8-7 11-15zM17 23q-4 0-4 3 0 4-4 4 9 2 11-4" stroke={DK} strokeWidth="1.500" fill="#f3f2f1" />
        </Svg>
      </div>
      <Svg w={225} h={11} className="mt-[5px]"><path d="M0 10.500h20.500l9.500-9 9.500 9H225" stroke="#8a8886" strokeWidth="1.200" /></Svg>
      <div className="mt-[14px] ml-[14px] grid w-[210px] grid-cols-6 gap-y-[12px]">
        {viz.map((v, i) => <Svg key={i} w={23} h={23} className="overflow-visible">{v}</Svg>)}
      </div>
      <div className="mt-[11px] border-t border-[#dcdad8]" />
      <T w={43} className="mt-[11px] ml-[15px] self-start text-[14.500px] leading-[20px]">Values</T>
      <div className="mt-[6px] ml-[4px] flex h-[35px] w-[214px] items-center rounded-[2px] border border-dashed border-[#c0bebc] bg-white pl-[13px] text-[14.500px]">
        <T w={134}>Add data fields here</T>
      </div>
      <T w={88} className="mt-[14px] ml-[15px] self-start text-[14.500px] leading-[20px] font-medium text-[#484644]">Drill through</T>
      <div className="mt-[10px] flex h-[22px] items-center justify-between pr-[27px] pl-[15px] text-[14.500px]">
        <T w={83}>Cross-report</T>
        <div className="flex h-[20px] w-[40px] items-center rounded-full border border-[#605e5c] bg-white pl-[5px] text-[11px] text-[#605e5c]">
          <span className="mr-[2px] h-[10px] w-[10px] rounded-full bg-[#605e5c]" />
          <T w={16}>Off</T>
        </div>
      </div>
      <div className="mt-[12px] flex h-[22px] items-center justify-between pr-[27px] pl-[15px] text-[14.500px]">
        <T w={93}>Keep all filters</T>
        <div className="flex h-[20px] w-[40px] items-center rounded-full bg-[#117865] pl-[6px] text-[11px] text-white">
          <T w={15}>On</T>
          <span className="ml-[3px] h-[10px] w-[10px] rounded-full bg-white" />
        </div>
      </div>
      <div className="mt-[12px] ml-[4px] flex h-[32px] w-[214px] shrink-0 items-center rounded-[2px] border border-dashed border-[#c0bebc] bg-white pt-[1px] pl-[11px] text-[14.500px]">
        <T w={189}>Add drill-through fields here</T>
      </div>
    </aside>
  );
}

function DataPane() {
  return (
    <aside className="flex grow flex-col bg-[#f3f2f1] text-[#252423]">
      <div className="flex h-[48px] items-center pr-[10px] pl-[10px]">
        <T w={42} className="mt-[2px] text-[18px] font-semibold">Data</T>
        <div className="ml-auto"><DblChev /></div>
      </div>
      <div className="mt-[9px] ml-[5px] flex h-[30px] w-[215px] items-center rounded-[4px] border border-[#d1d1d1] border-b-[#616161] bg-white pl-[14px] text-[15.500px] text-[#707070]">
        <Svg w={19} h={19}>
          <circle cx="8" cy="8" r="6.800" stroke="#616161" strokeWidth="1.300" />
          <path d="M13 13l5 5" stroke="#616161" strokeWidth="1.400" />
        </Svg>
        <T w={52} className="mt-[3px] ml-[8px]">Search</T>
      </div>
      <div className="mt-[16px] flex h-[22px] items-center pl-[19px] text-[14.500px]">
        <Svg w={9} h={14}><path d="M1 .7l6.500 6.300L1 13.300" stroke="#444" strokeWidth="1.300" /></Svg>
        <Svg w={16} h={16} className="ml-[8px]">
          <rect x="1" y="1" width="14" height="14" rx="3" stroke="#333" strokeWidth="1.400" />
          <path d="M1 5.500h14M1 10.500h14M5.500 1v14M10.500 1v14" stroke="#333" strokeWidth="1.200" />
        </Svg>
        <T w={140} className="ml-[7px] text-[#323130]">airlines-data - Sheet1</T>
      </div>
    </aside>
  );
}

function PageTabs() {
  return (
    <div className="flex h-[44px] w-[1417px] shrink-0 bg-[#f3f2f1] text-[14.500px] text-[#252423]">
      <div className="ml-[12px] flex w-[32px] flex-col items-center pt-[9px]">
        <Svg w={24} h={19} className="-ml-[2px]"><path d="M1 1h22v13H1zM12 14v4M7.500 18h9" stroke="#605e5c" strokeWidth="1.500" /></Svg>
        <div className="mt-[7px] h-[3px] w-[30px] rounded bg-[#117865]" />
      </div>
      <Svg w={18} h={26} className="mt-[6px] ml-[29px]"><rect x="1" y="1" width="16" height="23.500" rx="1.500" stroke="#605e5c" strokeWidth="1.500" /><path d="M7.500 21.500h3" stroke="#605e5c" strokeWidth="1.500" /></Svg>
      <Svg w={6} h={12} className="mt-[16px] ml-[26px]"><path d="M6 0v11L0 5.500z" fill="#c8c6c4" /></Svg>
      <Svg w={6} h={12} className="mt-[16px] ml-[22px]"><path d="M0 0v11l6-5.500z" fill="#c8c6c4" /></Svg>
      <div className="ml-[8px] flex w-[95px] justify-center border-x border-b-[5px] border-x-[#b3b0ad] border-b-[#117865] bg-white pt-[13px] leading-[20px] font-semibold">
        <T w={44}>Page 1</T>
      </div>
      <div className="flex w-[96px] justify-center border-r border-[#c8c6c4] bg-white pt-[13px] leading-[20px]"><T w={45}>Page 2</T></div>
      <div className="flex w-[49px] items-start justify-center bg-[#117865] pt-[13px]">
        <Svg w={14} h={14}><path d="M7 0v14M0 7h14" stroke="#fff" strokeWidth="3.400" /></Svg>
      </div>
    </div>
  );
}

function StatusBar() {
  return (
    <div className="flex h-[29px] shrink-0 items-center border-t border-[#dcdad8] bg-[#f3f2f1] pl-[5px] text-[14.500px] text-[#484644]">
      <T w={74} className="mt-[3px]">Page 1 of 2</T>
      <div className="ml-auto h-[2px] w-[5px] bg-[#605e5c]" />
      <Svg w={126} h={16} className="ml-[6px]">
        <path d="M0 8.500h126M63.500 5v7" stroke="#605e5c" strokeWidth="1.200" />
        <rect x="41.500" y="2" width="5" height="13" fill="#605e5c" />
      </Svg>
      <Svg w={10} h={10} className="ml-[6px]"><path d="M5 0v10M0 5h10" stroke="#605e5c" strokeWidth="1.700" /></Svg>
      <T w={29} className="ml-[17px] text-[#605e5c]">73%</T>
      <Svg w={22} h={16} className="mr-[21px] ml-[22px]">
        <rect x="1" y="1" width="20" height="14" stroke="#797775" strokeWidth="1.600" />
        <path d="M4 6V4h3M15 4h3v2M18 10v2h-3M7 12H4v-2" stroke="#605e5c" strokeWidth="1.200" />
      </Svg>
    </div>
  );
}

/* ---------- Taskbar app icons (30 x 30) ---------- */
const apps: { n: string; run?: boolean; svg: React.ReactNode }[] = [
  { n: "task", svg: <><rect x="7" y="1" width="23" height="20" rx="1" fill="#f2f2f2" /><rect x="0" y="9" width="22" height="19" rx="1" fill="#555" /><rect x="7" y="9" width="15" height="12" fill="#a5a5a5" /></> },
  { n: "copilot", svg: null },
  {
    n: "store",
    svg: <><path d="M7.500 6V1.500h14V6" stroke="#35b7f1" strokeWidth="2" /><path d="M0 5h29v20q0 4-4 4H4q-4 0-4-4z" fill="#f0f0f0" /><rect x="9" y="12" width="5" height="5" fill="#f25022" /><rect x="15" y="12" width="5" height="5" fill="#7fba00" /><rect x="9" y="18" width="5" height="5" fill="#00a4ef" /><rect x="15" y="18" width="5" height="5" fill="#ffb900" /></>,
  },
  { n: "ev", svg: <><circle cx="15" cy="15" r="15" fill="#c4262e" /><path d="M6 11h8l-1.500 4H6.500M5 19h7l1.500-4M15 11l2 8.500L23.500 9.500" stroke="#fff" strokeWidth="2.600" /></> },
  { n: "folder", run: true, svg: <><path d="M0 4q0-2 2-2h8l3 3h16v8H0z" fill="#e0a10c" /><rect y="5" width="30" height="23" rx="1" fill="#fcd04e" /><path d="M0 5h10l3-2" fill="#e0a10c" /><path d="M5 28v-5q0-2 2-2h16q2 0 2 2v5z" fill="#1a78cc" /><path d="M9 24.500h12" stroke="#0d5598" strokeWidth="1.500" /></> },
  { n: "hp", svg: <><circle cx="15" cy="15" r="14" fill="#0a4fd0" stroke="#fff" strokeWidth="2" /><path d="M12.500 1L5.500 20M9 12h3.500q1.500 0 1 1.700L11 21M21.500 11.500L14.500 29M18.500 11.500H24q1.500 0 1 1.600l-2 5.400q-.6 1.500-2.500 1.500h-4" stroke="#fff" strokeWidth="2" /></> },
  { n: "m365", svg: null },
  { n: "alexa", svg: <><circle cx="15" cy="15" r="13" stroke="#00caff" strokeWidth="4" /><path d="M12.500 29V25q-4-1-6-3" stroke="#1c1c1c" strokeWidth="1" /></> },
  {
    n: "outlook",
    svg: <><path d="M4 9L17 2l12 7v4H4z" fill="#3bb4ee" /><path d="M8 7l12-5 9 7-14 7z" fill="#1273c8" /><path d="M15 16l14-7v17q0 2-3 2H10z" fill="#2cb8f2" /><path d="M15 16l14-7v8l-9 4z" fill="#123f8c" /><path d="M5 22l10-6 14 11-3 1H8z" fill="#52d0fa" /><rect x="0" y="8" width="16" height="14" rx="1.500" fill="#1068c0" /><ellipse cx="8" cy="15" rx="3.300" ry="4" stroke="#fff" strokeWidth="2.200" /></>,
  },
  { n: "spotify", svg: <><circle cx="15" cy="15" r="14.500" fill="#1ed760" /><path d="M6 10.500q9-2.500 18 2M7 15.500q8-2 15.500 2M8 20q7-1.500 12.500 1.500" stroke="#1c1c1c" strokeWidth="2.300" strokeLinecap="round" /></> },
  {
    n: "edge",
    svg: <><defs><linearGradient id="edg" x1="0" x2="1" y1=".3" y2="0"><stop offset="0" stopColor="#1a7fd8" /><stop offset=".5" stopColor="#2fc0dc" /><stop offset="1" stopColor="#62e06a" /></linearGradient></defs><circle cx="15" cy="15" r="14.500" fill="#1470c4" /><path d="M.5 14Q3 0 16 .5 29.500 2 29.500 14q-1 6-8 6-5-1-4-4 3-7-5-8Q3 9 .5 14z" fill="url(#edg)" /><path d="M14 11q-5 5 0 12 5 4 14 0-5 8-14 6.500Q4 25 6 16q2-6 8-5z" fill="#0f4a9a" /><path d="M17.500 15q-2 5 4 5.500 4 0 7-3-1 6-6.500 6t-7.500-4 3-4.500z" fill="#1c1c1c" /></>,
  },
  {
    n: "chrome", run: true,
    svg: <><circle cx="15" cy="15" r="14.500" fill="#fbc116" /><path d="M2.500 7.500A14.500 14.500 0 0 1 27.600 7.800H15L8.500 18z" fill="#e33b2e" /><path d="M2.500 7.500l6.500 11q3 4 8.500 3L13 29.400A14.500 14.500 0 0 1 2.500 7.500z" fill="#2ba24c" /><circle cx="15" cy="15" r="7.300" fill="#fff" /><circle cx="15" cy="15" r="5.700" fill="#2a7ae4" /></>,
  },
  { n: "notes", run: true, svg: <><path d="M2 1h26v16l-11 11H2z" fill="#ffd400" /><path d="M28 14v13l-1 1H15z" fill="#f0b400" /><path d="M16 28V16q0-1 1-1h11z" fill="#444" /></> },
  {
    n: "whatsapp", run: true,
    svg: <><path d="M2 28.500l2-7.500A13.300 13.300 0 1 1 9 26.500z" stroke="#25d366" strokeWidth="2.600" /><path d="M10 8q-2 2-.5 5 3 6.500 9 8.500 3 0 4-3l-3.500-2.200-2 1.700q-3-1.500-4.500-4.500l1.500-1.500L12.300 8z" fill="#25d366" /></>,
  },
  { n: "vscode", run: true, svg: <><path d="M21 0l8 3v24l-8 3z" fill="#2ba0f0" /><path d="M21 0v8L3 22l-3-2.500z" fill="#0f70b8" /><path d="M21 30v-8L3 8l-3 2.500z" fill="#1a88d8" /></> },
  { n: "powerbi", svg: <><rect x="16" y="0" width="10" height="30" rx="1" fill="#e3a00e" /><path d="M18 8h8v21q0 1-1 1h-7z" fill="#c77c02" opacity=".6" /><path d="M9 8h9q1 0 1 1v21H9z" fill="#efc334" /><path d="M2 15h9q1 0 1 1v14H3q-1 0-1-1z" fill="#fbe27a" /></> },
];

function Taskbar() {
  return (
    <footer className="flex h-[61px] shrink-0 items-center border-t border-black bg-[#1c1c1c] text-white">
      <div className="relative ml-[26px] h-[30px] w-[34px] shrink-0">
        <Svg w={34} h={30}>
          <path d="M6 19q-6-1-6-6 0-4 5-5Q7 1 15 2q7 1 8 6 7 0 7 6 0 5-5 5z" fill="#a9c8f6" />
          <path d="M0 13q1-4 8-4 9 1 13 10H6q-6-1-6-6z" fill="#d4e2fb" opacity=".8" />
          <path d="M10 16q5 4 4 9-1 3-4 3t-3-4q2-3 3-8zM21 16q6 5 5 10-1 3-4 3t-4-4q3-3 3-9z" fill="#1a78f0" />
        </Svg>
        <div className="absolute -top-[7px] left-[14px] flex h-[20px] w-[20px] items-center justify-center rounded-full bg-[#ff99a4] text-[12.500px] text-black">
          <T w={16}>9+</T>
        </div>
      </div>
      <Svg w={29} h={29} className="ml-[238px]">
        <defs><linearGradient id="win" x1="0" y1="0" x2="1" y2="1"><stop offset="0" stopColor="#7fdcff" /><stop offset="1" stopColor="#0a94f8" /></linearGradient></defs>
        <path d="M0 0h13.800v14H0zM15 0h14v14H15zM0 15.200h13.800V29H0zM15 15.200h14V29H15z" fill="url(#win)" />
      </Svg>
      <div className="ml-[17px] flex h-[40px] w-[275px] shrink-0 items-center rounded-full border border-[#4a4a4a] bg-[#3a3a3a] pl-[14px] text-[15.500px] text-[#d0d0d0]">
        <Svg w={19} h={20}><circle cx="8" cy="8" r="6.800" stroke="#e8e8e8" strokeWidth="1.900" /><path d="M13 13l5 5.500" stroke="#e8e8e8" strokeWidth="2.300" /></Svg>
        <T w={52} className="mt-[2px] ml-[12px]">Search</T>
      </div>
      <div className="ml-[2.500px] flex">
        {apps.map((a) => (
          <div key={a.n} className="relative flex h-[60px] w-[55px] items-center justify-center">
            {a.n === "powerbi" && <div className="absolute left-[2px] top-[5px] h-[50px] w-[49px] rounded-[5px] border border-[#333] bg-[#2a2a2a]" />}
            {a.svg ? <Svg w={30} h={30} className="relative overflow-visible">{a.svg}</Svg> : <CopilotLogo w={a.n === "m365" ? 30 : 28} h={26} id={a.n} />}
            {a.n === "m365" && <div className="absolute top-[37px] left-[22px] flex h-[9px] w-[22px] items-center justify-center bg-black text-[7.500px] leading-[9px] font-bold"><T w={18}>M365</T></div>}
            {a.n === "whatsapp" && <div className="absolute top-[8px] left-[26px] flex h-[21px] w-[25px] items-center justify-center rounded-full bg-[#30e0f8] text-[12.500px] text-black"><T w={15}>62</T></div>}
            {a.run && <div className="absolute bottom-[6px] h-[4px] w-[8px] rounded-full bg-[#9a9a9a]" />}
            {a.n === "powerbi" && <div className="absolute bottom-[5px] left-[17px] h-[4px] w-[20px] rounded-full bg-[#30e0f8]" />}
          </div>
        ))}
      </div>
      <Svg w={14} h={9} className="ml-[84px]"><path d="M1 8l6-6.500L13 8" stroke="#fff" strokeWidth="1.700" /></Svg>
      <Svg w={22} h={22} className="ml-[22px]">
        <path d="M2 8q3-7 9-7 6 0 9 6M20 1v6h-6M2 13q2 7 9 8M2 20v-6h6" stroke="#e0e0e0" strokeWidth="1.400" />
        <circle cx="16" cy="16" r="5.500" fill="#1077d8" />
      </Svg>
      <div className="ml-[21px] flex w-[34px] flex-col items-center text-[14px] leading-[20px]"><T w={30}>ENG</T><T w={15}>IN</T></div>
      <Svg w={20} h={18} className="ml-[19px]">
        <path d="M1 7q9-9 18 0" stroke="#777" strokeWidth="1.500" />
        <path d="M4 10q6-6.500 12 0M7 13q3-3 6 0" stroke="#fff" strokeWidth="1.600" />
        <circle cx="10" cy="15.500" r="1.700" fill="#fff" />
      </Svg>
      <Svg w={20} h={18} className="ml-[9px]">
        <path d="M1 6.500h3L9 2v14l-5-4.500H1z" stroke="#fff" strokeWidth="1.400" />
        <path d="M11.500 6q2 3 0 6M14 4q4 5 0 10" stroke="#fff" strokeWidth="1.300" />
        <path d="M16.500 2q5.500 7 0 14" stroke="#777" strokeWidth="1.300" />
      </Svg>
      <Svg w={22} h={18} className="ml-[10px]">
        <rect x="2" y="5" width="16" height="11" rx="2" stroke="#fff" strokeWidth="1.500" />
        <path d="M5 8h5v6H5zM19 8.500h2v4h-2z" fill="#fff" />
        <path d="M4 0L0 8h3l-1 6 6-8H4l2-6z" fill="#fff" stroke="#1c1c1c" />
      </Svg>
      <div className="mr-[24px] ml-auto flex flex-col items-end text-[14px] leading-[20px]"><T w={37}>21:29</T><T w={78}>27-10-2025</T></div>
    </footer>
  );
}

export default function App() {
  return (
    <div className="flex h-[1080px] w-[1920px] flex-col overflow-hidden bg-[#f3f2f1] font-['Noto_Sans','Open_Sans',sans-serif]">
      <TitleBar />
      <Ribbon />
      <div className="flex h-[790px] shrink-0">
        <Rail />
        <div className="flex w-[1417px] shrink-0 flex-col">
          <div className="flex h-[746px]">
            <Report />
            <Filters />
          </div>
          <PageTabs />
        </div>
        <Visualizations />
        <DataPane />
      </div>
      <StatusBar />
      <Taskbar />
    </div>
  );
}
